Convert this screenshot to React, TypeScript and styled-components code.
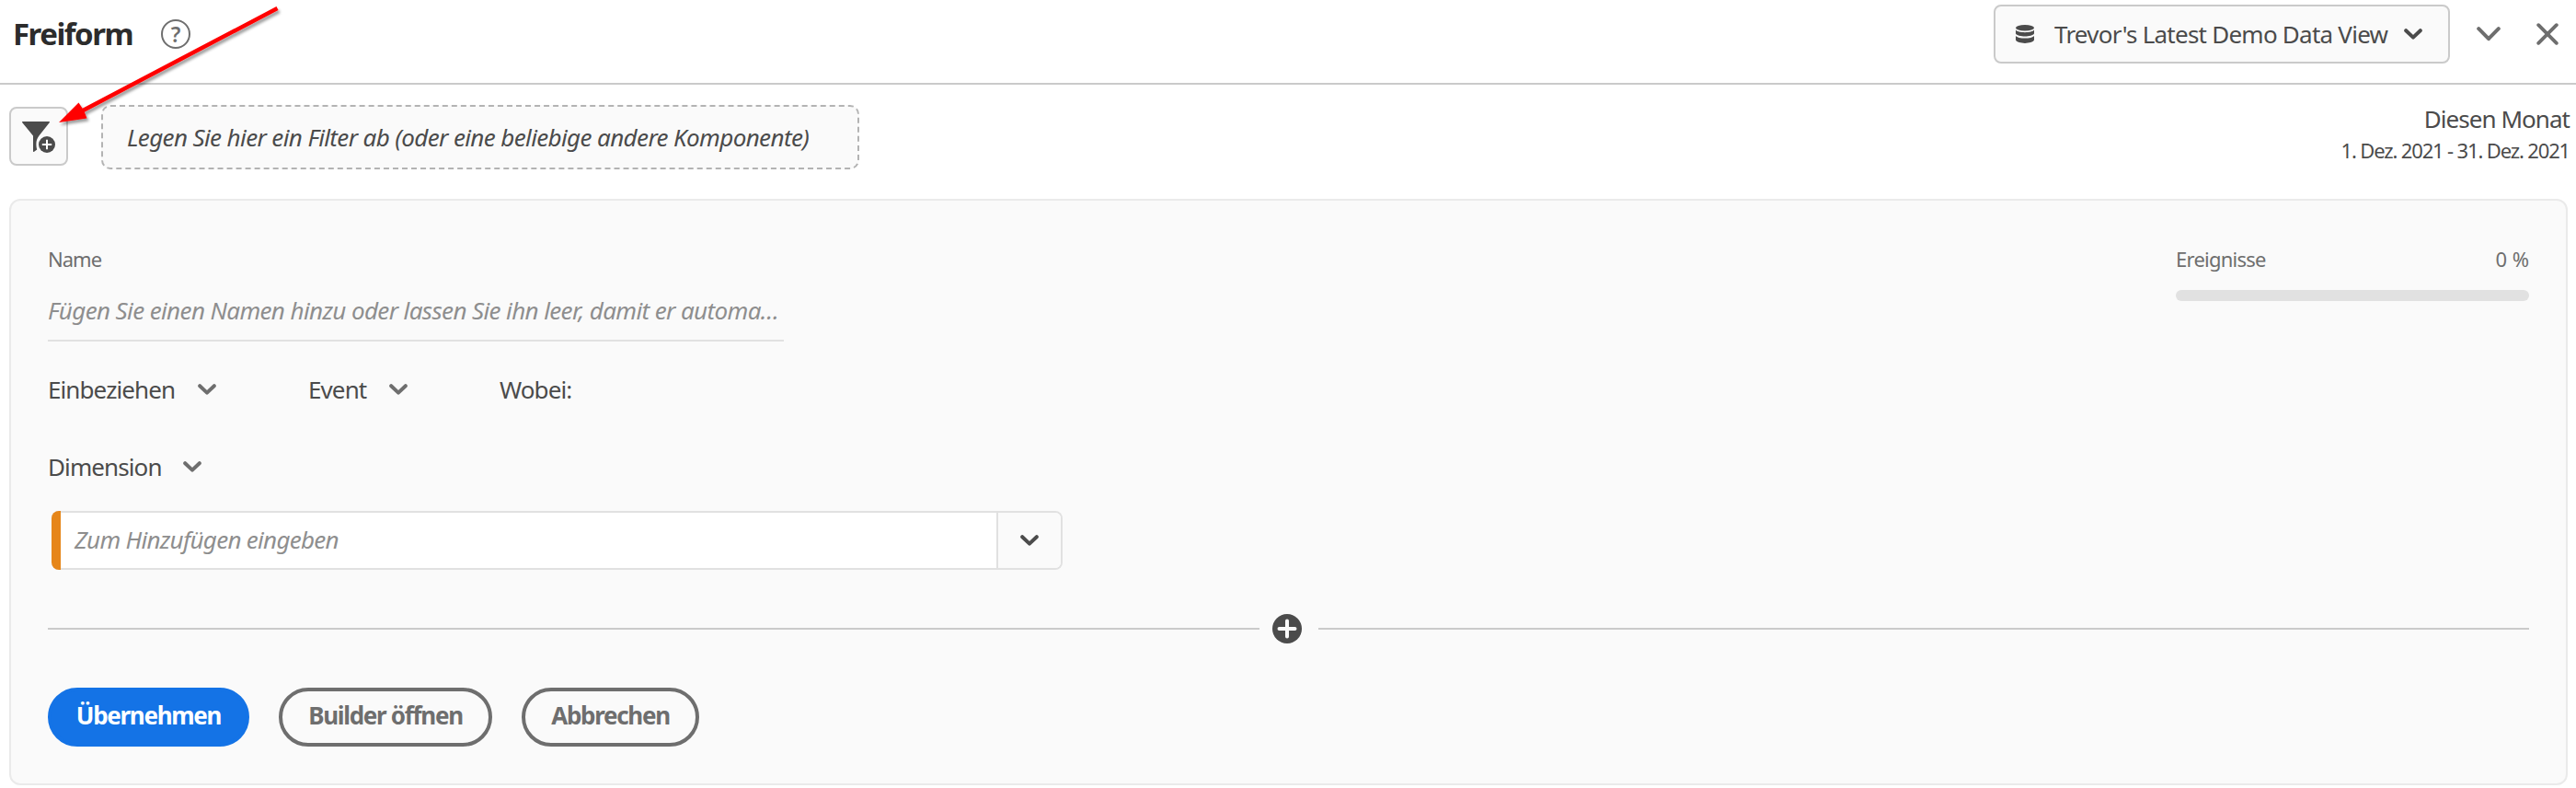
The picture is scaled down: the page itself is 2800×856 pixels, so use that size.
import React from "react";
import styled, { createGlobalStyle } from "styled-components";

const color = {
  text: "#4b4b4b",
  heading: "#2c2c2c",
  muted: "#6e6e6e",
  placeholder: "#8e8e8e",
  surface: "#fafafa",
  border: "#cacaca",
  line: "#e1e1e1",
  accent: "#1473e6",
  dimension: "#e68619",
};

const GlobalStyle = createGlobalStyle`
  * { box-sizing: border-box; }
  body {
    margin: 0;
    background: #fff;
    color: ${color.text};
    font-family: "Noto Sans", sans-serif;
    font-size: 26px;
    line-height: 36px;
    letter-spacing: -0.62px;
    white-space: nowrap;
  }
  svg { display: block; flex: none; }
  button { font: inherit; letter-spacing: inherit; color: inherit; margin: 0; }
`;

const Page = styled.div`
  position: relative;
  width: 2800px;
  height: 856px;
  overflow: hidden;
`;

const Header = styled.header`
  display: flex;
  align-items: flex-start;
  height: 92px;
  padding: 5px 19px 0 14px;
  border-bottom: 2px solid ${color.border};
`;

const HeaderGroup = styled.div<{ $end?: boolean }>`
  display: flex;
  align-items: center;
  height: 64px;
  margin-left: ${(p) => (p.$end ? "auto" : "0")};
`;

const Title = styled.h1`
  width: 161px;
  margin: 0;
  color: ${color.heading};
  font-size: 33px;
  font-weight: 700;
  letter-spacing: -1.5px;
`;

const HelpBadge = styled.span`
  display: flex;
  align-items: center;
  justify-content: center;
  width: 32px;
  height: 32px;
  border: 2px solid ${color.muted};
  border-radius: 50%;
  color: ${color.muted};
  font-size: 23px;
  font-weight: 600;
  line-height: 28px;
  letter-spacing: 0;
`;

const DataViewPicker = styled.button`
  display: flex;
  align-items: center;
  width: 496px;
  height: 64px;
  padding: 0 28px 0 21px;
  border: 2px solid ${color.border};
  border-radius: 8px;
  background: ${color.surface};
`;

const PickerLabel = styled.span`
  flex: 1;
  margin-left: 21px;
  text-align: left;
  letter-spacing: -0.76px;
`;

const IconButton = styled.button<{ $gap: number }>`
  display: flex;
  margin-left: ${(p) => p.$gap}px;
  padding: 0;
  border: 0;
  background: none;
  color: ${color.muted};
`;

const FilterBar = styled.section`
  display: flex;
  align-items: center;
  height: 114px;
  padding: 0 7px 0 10px;
`;

const AddFilterButton = styled.button`
  display: flex;
  width: 64px;
  height: 64px;
  margin: 0 36px 2px 0;
  padding: 14px 0 0 12px;
  border: 2px solid ${color.border};
  border-radius: 8px;
  background: ${color.surface};
`;

const DropZone = styled.div`
  display: flex;
  align-items: center;
  width: 824px;
  height: 70px;
  padding-left: 26px;
  border: 2px dashed #b3b3b3;
  border-radius: 10px;
  background: ${color.surface};
  font-style: italic;
`;

const DateRange = styled.div`
  display: flex;
  flex-direction: column;
  align-items: flex-end;
  height: 76px;
  margin-left: auto;
`;

const DateName = styled.span`
  letter-spacing: -0.95px;
`;

const DateDetail = styled.span`
  font-size: 22px;
  line-height: 33px;
  letter-spacing: -1.15px;
`;

const Builder = styled.main`
  display: flex;
  flex-direction: column;
  width: 2781px;
  height: 637px;
  margin: 10px 0 0 10px;
  padding: 48px 40px 0;
  border: 2px solid #eaeaea;
  border-radius: 12px;
  background: ${color.surface};
`;

const BuilderTop = styled.div`
  display: flex;
  justify-content: space-between;
  height: 105px;
`;

const NameField = styled.label`
  display: flex;
  flex-direction: column;
  width: 800px;
  border-bottom: 2px solid ${color.line};
`;

const FieldLabel = styled.span<{ $track?: number }>`
  color: ${color.muted};
  font-size: 22px;
  line-height: 31px;
  letter-spacing: ${(p) => p.$track ?? -0.75}px;
`;

const Placeholder = styled.span<{ $top?: number; $track?: number }>`
  margin-top: ${(p) => p.$top ?? 0}px;
  color: ${color.placeholder};
  font-style: italic;
  letter-spacing: ${(p) => p.$track ?? -0.62}px;
`;

const Meter = styled.div`
  width: 384px;
`;

const MeterLabels = styled.div`
  display: flex;
  justify-content: space-between;
`;

const MeterTrack = styled.div`
  height: 12px;
  margin-top: 18px;
  border-radius: 6px;
  background: ${color.line};
`;

const ConditionRow = styled.div<{ $top: number }>`
  display: flex;
  align-items: center;
  height: 36px;
  margin-top: ${(p) => p.$top}px;
  letter-spacing: -0.9px;
`;

const Dropdown = styled.div<{ $width: number; $label: number }>`
  display: flex;
  align-items: center;
  width: ${(p) => p.$width}px;
  color: ${color.muted};

  > span {
    width: ${(p) => p.$label}px;
    color: ${color.text};
  }
`;

const ComboBox = styled.div`
  display: flex;
  width: 1099px;
  height: 64px;
  margin: 30px 0 0 4px;
  border: 2px solid ${color.line};
  border-left: 0;
  border-radius: 8px;
  background: #fff;
`;

const DimensionMark = styled.span`
  width: 10px;
  margin: -2px 0;
  border-radius: 8px 0 0 8px;
  background: ${color.dimension};
`;

const ComboInput = styled.div`
  flex: 1;
  padding: 11px 0 0 15px;
`;

const ComboButton = styled.button`
  display: flex;
  align-items: center;
  justify-content: center;
  width: 70px;
  padding: 0;
  border: 0;
  border-left: 2px solid ${color.line};
  border-radius: 0 6px 6px 0;
  background: ${color.surface};
`;

const AddDivider = styled.div`
  display: flex;
  align-items: center;
  height: 32px;
  margin-top: 48px;
`;

const Rule = styled.span`
  flex: 1;
  height: 2px;
  background: ${color.border};
`;

const AddSlot = styled.span`
  width: 64px;
  padding-left: 14px;
`;

const Actions = styled.div`
  display: flex;
  gap: 32px;
  margin-top: 48px;
`;

const ActionButton = styled.button<{ $width: number; $primary?: boolean }>`
  width: ${(p) => p.$width}px;
  height: 64px;
  padding: 0 0 4px;
  border: 4px solid ${(p) => (p.$primary ? color.accent : color.muted)};
  border-radius: 32px;
  background: ${(p) => (p.$primary ? color.accent : "transparent")};
  color: ${(p) => (p.$primary ? "#fff" : color.muted)};
  font-weight: 700;
  letter-spacing: -1.3px;
`;

const Pointer = styled.svg`
  position: absolute;
  left: 56px;
  top: 0;
  pointer-events: none;
`;

const Chevron = ({ width = 20, height = 12 }: { width?: number; height?: number }) => (
  <svg width={width} height={height} viewBox="0 0 20 12" fill="none">
    <path d="M2.2 2.2 L10 9.6 L17.8 2.2" stroke="currentColor" strokeWidth="4" strokeLinecap="round" strokeLinejoin="round" />
  </svg>
);

const WideChevron = () => (
  <svg width="26" height="16" viewBox="0 0 26 16" fill="none">
    <path d="M2.2 2.2 L13 13.2 L23.8 2.2" stroke="currentColor" strokeWidth="4" strokeLinecap="round" strokeLinejoin="round" />
  </svg>
);

const Close = () => (
  <svg width="24" height="24" viewBox="0 0 24 24">
    <path d="M2.2 2.2 L21.8 21.8 M21.8 2.2 L2.2 21.8" stroke="currentColor" strokeWidth="3.8" strokeLinecap="round" />
  </svg>
);

const Database = () => (
  <svg width="22" height="20" viewBox="0 0 22 20" fill={color.text}>
    <ellipse cx="11" cy="3.2" rx="10" ry="3.2" />
    <path d="M1 5.5 C3 9 19 9 21 5.5 V9.4 C19 13.4 3 13.4 1 9.4 Z" />
    <path d="M1 12 C3 15.4 19 15.4 21 12 V16.6 C19 21 3 21 1 16.6 Z" />
  </svg>
);

const FilterAdd = () => (
  <svg width="36" height="35" viewBox="0 0 36 35">
    <path d="M0.5 0 H29.5 Q30.3 0.6 29.7 1.3 L18.6 15.2 C16.2 18 15.4 21 15.4 24.5 C15.4 27 15.7 28.8 16.2 30.4 L12.8 33 Q12 33.2 12 32.3 V15.5 L0.3 1.3 Q-0.3 0.5 0.5 0 Z" fill={color.text} />
    <circle cx="27" cy="25" r="9" fill={color.text} />
    <path d="M27 19.8 V30.2 M21.8 25 H32.2" stroke="#fff" strokeWidth="2" />
  </svg>
);

const AddCircle = () => (
  <svg width="32" height="32" viewBox="0 0 32 32">
    <circle cx="16" cy="16" r="16" fill={color.text} />
    <path d="M16 7.5 V24.5 M7.5 16 H24.5" stroke="#fafafa" strokeWidth="4" strokeLinecap="round" />
  </svg>
);

export default function App() {
  return (
    <Page>
      <GlobalStyle />
      <Header>
        <HeaderGroup>
          <Title>Freiform</Title>
          <HelpBadge>?</HelpBadge>
        </HeaderGroup>
        <HeaderGroup $end>
          <DataViewPicker>
            <Database />
            <PickerLabel>Trevor's Latest Demo Data View</PickerLabel>
            <Chevron />
          </DataViewPicker>
          <IconButton $gap={29} aria-label="Einklappen">
            <WideChevron />
          </IconButton>
          <IconButton $gap={39} aria-label="Schließen">
            <Close />
          </IconButton>
        </HeaderGroup>
      </Header>

      <FilterBar>
        <AddFilterButton aria-label="Filter hinzufügen">
          <FilterAdd />
        </AddFilterButton>
        <DropZone>Legen Sie hier ein Filter ab (oder eine beliebige andere Komponente)</DropZone>
        <DateRange>
          <DateName>Diesen Monat</DateName>
          <DateDetail>1. Dez. 2021 - 31. Dez. 2021</DateDetail>
        </DateRange>
      </FilterBar>

      <Builder>
        <BuilderTop>
          <NameField>
            <FieldLabel $track={-1}>Name</FieldLabel>
            <Placeholder $top={22}>Fügen Sie einen Namen hinzu oder lassen Sie ihn leer, damit er automa…</Placeholder>
          </NameField>
          <Meter>
            <MeterLabels>
              <FieldLabel>Ereignisse</FieldLabel>
              <FieldLabel $track={0}>0 %</FieldLabel>
            </MeterLabels>
            <MeterTrack />
          </Meter>
        </BuilderTop>

        <ConditionRow $top={34}>
          <Dropdown $width={283} $label={163}>
            <span>Einbeziehen</span>
            <Chevron />
          </Dropdown>
          <Dropdown $width={208} $label={88}>
            <span>Event</span>
            <Chevron />
          </Dropdown>
          <span>Wobei:</span>
        </ConditionRow>

        <ConditionRow $top={48}>
          <Dropdown $width={167} $label={147}>
            <span>Dimension</span>
            <Chevron />
          </Dropdown>
        </ConditionRow>

        <ComboBox>
          <DimensionMark />
          <ComboInput>
            <Placeholder $track={-0.72}>Zum Hinzufügen eingeben</Placeholder>
          </ComboInput>
          <ComboButton aria-label="Liste öffnen">
            <Chevron />
          </ComboButton>
        </ComboBox>

        <AddDivider>
          <Rule />
          <AddSlot>
            <AddCircle />
          </AddSlot>
          <Rule />
        </AddDivider>

        <Actions>
          <ActionButton $width={219} $primary>Übernehmen</ActionButton>
          <ActionButton $width={232}>Builder öffnen</ActionButton>
          <ActionButton $width={193}>Abbrechen</ActionButton>
        </Actions>
      </Builder>

      <Pointer width="260" height="150" viewBox="56 0 260 150">
        <defs>
          <filter id="pointerShadow" x="-10%" y="-10%" width="120%" height="130%">
            <feDropShadow dx="2" dy="3" stdDeviation="1.5" floodColor="#000" floodOpacity="0.38" />
          </filter>
        </defs>
        <path
          d="M64 133 L85.5 111.5 L89.6 117.8 L300.5 7 L302.5 11 L91.8 121.8 L94.5 128.5 Z"
          fill="#ff0000"
          filter="url(#pointerShadow)"
        />
      </Pointer>
    </Page>
  );
}
